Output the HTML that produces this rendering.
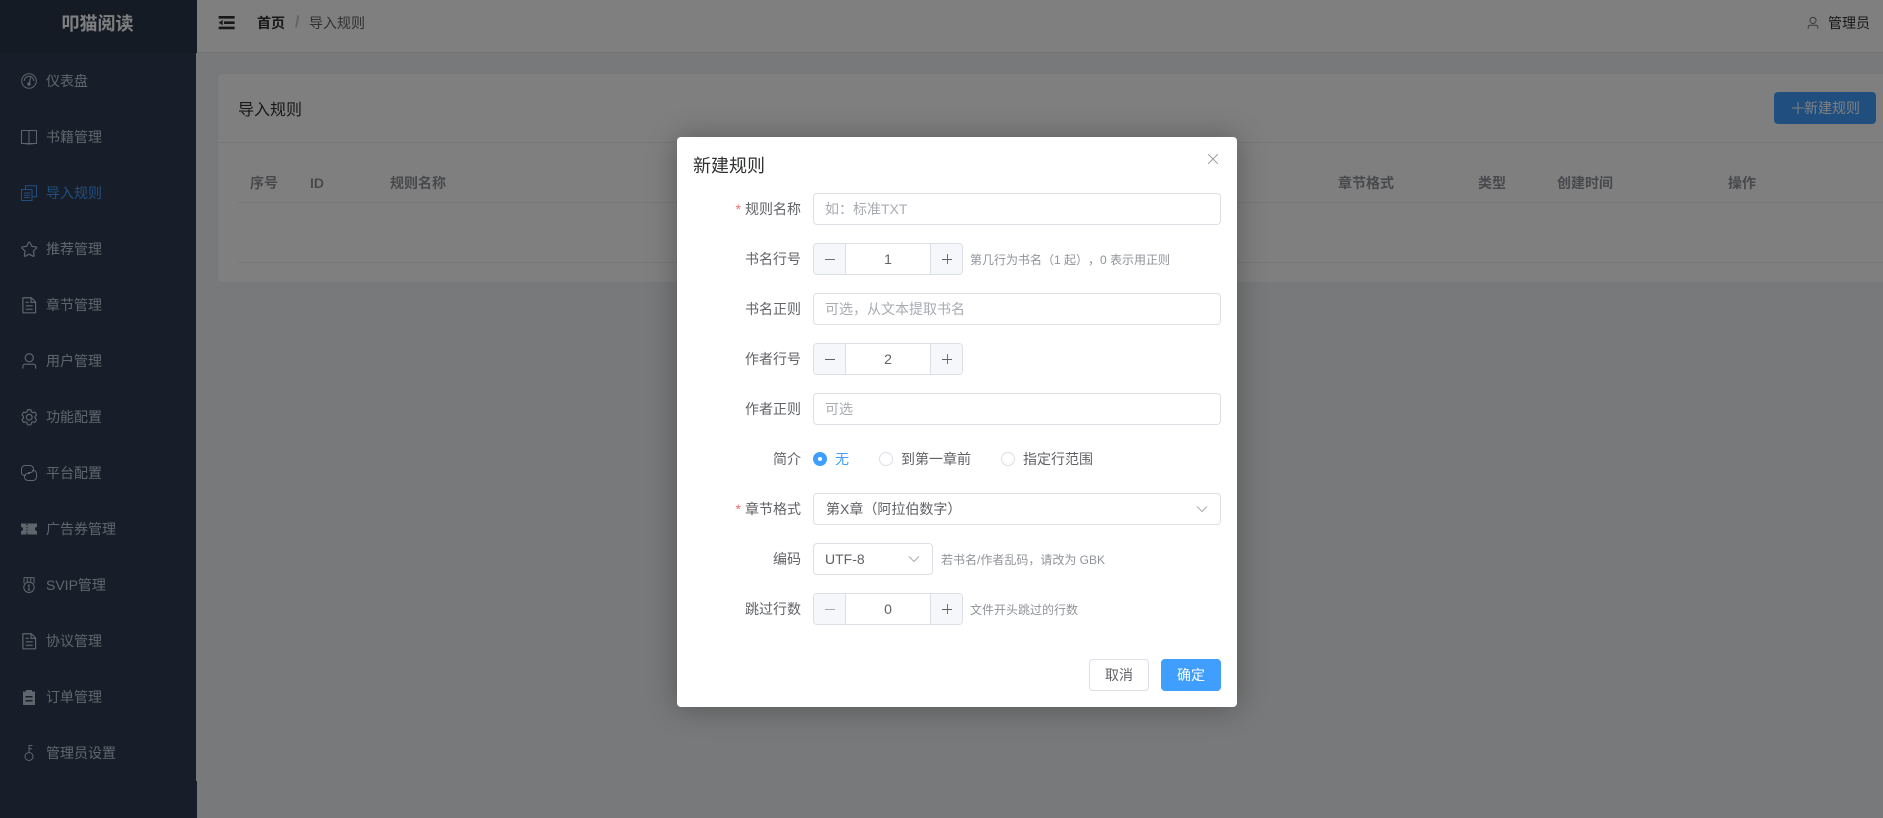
<!DOCTYPE html>
<html lang="zh"><head><meta charset="utf-8"><title>导入规则</title>
<style>
*{box-sizing:border-box}
html,body{margin:0;padding:0;width:1883px;height:818px;overflow:hidden;background:#f0f2f5;font-family:"Liberation Sans","Noto Sans CJK SC",sans-serif;font-size:14px;color:#606266}
.a{position:absolute;white-space:nowrap}
.side{position:absolute;left:0;top:0;width:196px;height:818px;background:#2e3d53}
.side2{position:absolute;left:196px;top:781px;width:1px;height:37px;background:#2e3d53}
.logo{position:absolute;left:0;top:0;width:197px;height:53px;padding-right:2px;background:#2a374a;color:#fff;font-size:18px;font-weight:bold;text-align:center;line-height:48px}
.mi{position:absolute;left:0;width:196px;height:56px;color:#bfcbd9;line-height:56px;font-size:14px}
.mi svg{position:absolute;left:21px;top:20px;width:16px;height:16px;fill:currentColor}
.mi svg.ep{left:19.750px;top:18.750px;width:18.500px;height:18.500px}
.mi span{position:absolute;left:46px;top:0}
.mi.on{color:#409eff}
.head{position:absolute;left:197px;top:0;width:1686px;height:53px;background:#fff;border-bottom:1px solid #e6e6e6;box-sizing:border-box}
.card{position:absolute;left:217px;top:73px;width:1680px;height:210px;background:#fff;border:1px solid #ebeef5;border-radius:4px}
.line{position:absolute;height:1px;background:#ebeef5}
.th{position:absolute;top:173px;line-height:20px;font-weight:bold;color:#909399;white-space:nowrap}
.mask{position:absolute;left:0;top:0;width:1883px;height:818px;background:rgba(0,0,0,.5)}
.dlg{position:absolute;left:677px;top:137px;width:560px;height:570px;background:#fff;border-radius:4px;box-shadow:0 1px 30px rgba(0,0,0,.3)}
.lb{position:absolute;right:436px;line-height:32px;height:32px;white-space:nowrap;color:#606266}
.lb i{color:#f56c6c;font-style:normal;margin-right:4px}
.inp{position:absolute;left:136px;width:408px;height:32px;border:1px solid #dcdfe6;border-radius:4px;line-height:30px;padding-left:11px;background:#fff;white-space:nowrap}
.ph{color:#a8abb2}
.num{position:absolute;left:136px;width:150px;height:32px;border:1px solid #dcdfe6;border-radius:4px;background:#fff;text-align:center;line-height:30px;overflow:hidden}
.num b{position:absolute;top:0;width:32px;height:30px;background:#f5f7fa;border:0 solid #dcdfe6}
.num b.m{left:0;border-right-width:1px}
.num b.p{right:0;border-left-width:1px}
.num svg{position:absolute;left:9px;top:8px;width:14px;height:14px}
.hint{position:absolute;font-size:12px;line-height:16px;color:#909399;white-space:nowrap}
.rd{position:absolute;top:315px;width:14px;height:14px;border-radius:50%;border:1px solid #dcdfe6;background:#fff}
.rl{position:absolute;top:312px;line-height:20px;white-space:nowrap}
.chev{position:absolute;width:14px;height:14px}
.btn{position:absolute;top:522px;width:60px;height:32px;border-radius:4px;border:1px solid #dcdfe6;text-align:center;line-height:30px;background:#fff}
</style></head><body>
<div class="head"></div>
<svg class="a" style="left:216.300px;top:12.300px;width:21.300px;height:21.300px" viewBox="0 0 1024 1024" fill="#303133"><path d="M896 192H128v128h768zm0 256H384v128h512zm0 256H128v128h768zM320 384 128 512l192 128z"/></svg>
<div class="a" style="left:257px;top:13px;line-height:20px;font-weight:bold;color:#303133">首页</div>
<div class="a" style="left:295px;top:13px;line-height:20px;color:#c0c4cc;font-weight:bold;font-size:16px">/</div>
<div class="a" style="left:309px;top:13px;line-height:20px;color:#606266">导入规则</div>
<svg class="a" style="left:1806px;top:16px;width:14px;height:14px" viewBox="0 0 1024 1024" fill="#606266"><path d="M512 512a192 192 0 1 0 0-384 192 192 0 0 0 0 384m0 64a256 256 0 1 1 0-512 256 256 0 0 1 0 512m320 320v-96a96 96 0 0 0-96-96H288a96 96 0 0 0-96 96v96a32 32 0 1 1-64 0v-96a160 160 0 0 1 160-160h448a160 160 0 0 1 160 160v96a32 32 0 1 1-64 0"/></svg>
<div class="a" style="left:1828px;top:13px;line-height:20px;color:#303133">管理员</div>

<div class="card"></div>
<div class="a" style="left:238px;top:99px;font-size:16px;line-height:24px;color:#303133">导入规则</div>
<div class="line" style="left:218px;top:142px;width:1665px"></div>
<div class="a" style="left:1774px;top:92px;width:102px;height:32px;background:#409eff;border-radius:4px;color:#fff;line-height:32px;padding-left:30px">新建规则</div>
<svg class="a" style="left:1791px;top:101px;width:14px;height:14px" viewBox="0 0 14 14" fill="none" stroke="#fff" stroke-width="1"><path d="M7 1v12M1 7h12"/></svg>
<div class="th" style="left:250px">序号</div><div class="th" style="left:310px">ID</div><div class="th" style="left:390px">规则名称</div>
<div class="th" style="left:1338px">章节格式</div><div class="th" style="left:1478px">类型</div><div class="th" style="left:1557px">创建时间</div><div class="th" style="left:1728px">操作</div>
<div class="line" style="left:238px;top:202px;width:1645px"></div>
<div class="line" style="left:238px;top:262px;width:1645px"></div>

<div class="side"></div><div class="side2"></div>
<div class="logo">叩猫阅读</div>
<div class="mi" style="top:53px"><svg viewBox="0 0 16 16" fill="none" stroke="currentColor" style="fill:none"><circle cx="8" cy="8" r="7.3"/><path d="M3.2 8A4.8 4.8 0 0 1 12.8 8"/><path d="M9.5 4.5 8.4 10"/><circle cx="8" cy="11" r="1.2" fill="currentColor"/></svg><span>仪表盘</span></div>
<div class="mi" style="top:109px"><svg viewBox="0 0 16 16" fill="none" stroke="currentColor" style="fill:none"><path d="M.5 1.5H8V14.5H.5zM8 1.5H15.5V14.5H8z"/><path d="M.5 14.5 8 15.3 15.5 14.5" stroke-width=".6"/></svg><span>书籍管理</span></div>
<div class="mi on" style="top:165px"><svg viewBox="0 0 16 16" fill="none" stroke="currentColor" style="fill:none"><path d="M.5 4.5h10.5v11H.5zM4.500 4V.7h11v11H11.300"/><path d="M3 8h6M3 10.200h6M3 12.500h6"/></svg><span>导入规则</span></div>
<div class="mi" style="top:221px"><svg class="ep" viewBox="0 0 1024 1024"><path d="m512 747.84 228.16 119.936a6.4 6.4 0 0 0 9.28-6.72l-43.52-254.08 184.512-179.904a6.4 6.4 0 0 0-3.52-10.88l-255.104-37.12L517.76 147.904a6.4 6.4 0 0 0-11.52 0L392.192 379.072l-255.104 37.12a6.4 6.4 0 0 0-3.52 10.88L318.08 606.976l-43.584 254.08a6.4 6.4 0 0 0 9.28 6.72zM313.6 924.48a70.4 70.4 0 0 1-102.144-74.24l37.888-220.928L88.96 472.96A70.4 70.4 0 0 1 128 352.896l221.76-32.256 99.2-200.96a70.4 70.4 0 0 1 126.208 0l99.2 200.96 221.824 32.256a70.4 70.4 0 0 1 39.04 120.064L774.72 629.376l37.888 220.928a70.4 70.4 0 0 1-102.144 74.24L512 820.096l-198.4 104.32z"/></svg><span>推荐管理</span></div>
<div class="mi" style="top:277px"><svg class="ep" viewBox="0 0 1024 1024"><path d="M832 384H576V128H192v768h640zm-26.496-64L640 154.496V320zM160 64h480l256 256v608a32 32 0 0 1-32 32H160a32 32 0 0 1-32-32V96a32 32 0 0 1 32-32m160 448h384v64H320zm0-192h160v64H320zm0 384h384v64H320z"/></svg><span>章节管理</span></div>
<div class="mi" style="top:333px"><svg class="ep" viewBox="0 0 1024 1024"><path d="M512 512a192 192 0 1 0 0-384 192 192 0 0 0 0 384m0 64a256 256 0 1 1 0-512 256 256 0 0 1 0 512m320 320v-96a96 96 0 0 0-96-96H288a96 96 0 0 0-96 96v96a32 32 0 1 1-64 0v-96a160 160 0 0 1 160-160h448a160 160 0 0 1 160 160v96a32 32 0 1 1-64 0"/></svg><span>用户管理</span></div>
<div class="mi" style="top:389px"><svg class="ep" viewBox="0 0 1024 1024"><path d="M600.704 64a32 32 0 0 1 30.464 22.208l35.2 109.376c14.784 7.232 28.928 15.36 42.432 24.512l112.384-24.192a32 32 0 0 1 34.432 15.36L944.32 364.8a32 32 0 0 1-4.032 37.504l-77.12 85.12a357.12 357.12 0 0 1 0 49.024l77.12 85.248a32 32 0 0 1 4.032 37.504l-88.704 153.6a32 32 0 0 1-34.432 15.296L708.8 803.904c-13.44 9.088-27.648 17.28-42.368 24.512l-35.264 109.376A32 32 0 0 1 600.704 960H423.296a32 32 0 0 1-30.464-22.208L357.696 828.48a351.616 351.616 0 0 1-42.56-24.64l-112.32 24.256a32 32 0 0 1-34.432-15.36L79.68 659.2a32 32 0 0 1 4.032-37.504l77.12-85.248a357.12 357.12 0 0 1 0-48.896l-77.12-85.248A32 32 0 0 1 79.68 364.8l88.704-153.6a32 32 0 0 1 34.432-15.296l112.32 24.256c13.568-9.152 27.776-17.408 42.56-24.64l35.2-109.312A32 32 0 0 1 423.232 64H600.64zm-23.424 64H446.72l-36.352 113.088-24.512 11.968a294.113 294.113 0 0 0-34.816 20.096l-22.656 15.36-116.224-25.088-65.28 113.152 79.68 88.192-1.92 27.136a293.12 293.12 0 0 0 0 40.192l1.92 27.136-79.808 88.192 65.344 113.152 116.224-25.024 22.656 15.296a294.113 294.113 0 0 0 34.816 20.096l24.512 11.968L446.72 896h130.688l36.48-113.152 24.448-11.904a288.282 288.282 0 0 0 34.752-20.096l22.592-15.296 116.288 25.024 65.28-113.152-79.744-88.192 1.92-27.136a293.12 293.12 0 0 0 0-40.256l-1.92-27.136 79.808-88.128-65.344-113.152-116.288 24.96-22.592-15.232a287.616 287.616 0 0 0-34.752-20.096l-24.448-11.904L577.344 128zM512 320a192 192 0 1 1 0 384 192 192 0 0 1 0-384m0 64a128 128 0 1 0 0 256 128 128 0 0 0 0-256"/></svg><span>功能配置</span></div>
<div class="mi" style="top:445px"><svg viewBox="0 0 16 16" fill="none" stroke="currentColor" style="fill:none"><path d="M5 10.500H3.500A3 3 0 0 1 .5 7.500V4A3.500 3.500 0 0 1 4 .5H9A3.500 3.500 0 0 1 12.500 4V4.500A3 3 0 0 1 9.500 7.500H7"/><path d="M11 5.500H12.500A3 3 0 0 1 15.500 8.500V12A3.500 3.500 0 0 1 12 15.500H7A3.500 3.500 0 0 1 3.500 12V11.500A3 3 0 0 1 6.500 8.500H9"/></svg><span>平台配置</span></div>
<div class="mi" style="top:501px"><svg viewBox="0 0 16 16"><path d="M0 2.500H5.500V4.500H6.500V2.500H16V6A2 2 0 0 0 16 10V13.500H6.500V11.500H5.500V13.500H0V10A2 2 0 0 0 0 6zM5.500 6V7.200H6.500V6zM5.500 8.800V10H6.500V8.800z"/></svg><span>广告券管理</span></div>
<div class="mi" style="top:557px"><svg viewBox="0 0 16 16" fill="none" stroke="currentColor" style="fill:none"><path d="M3 .6H13V6.500M3 .6V6.500M6.300 .6V5.500M9.700 .6V5.500"/><circle cx="8" cy="10.300" r="5.200"/><path d="M6.800 8.800 8 8V13M6.700 13H9.300"/></svg><span>SVIP管理</span></div>
<div class="mi" style="top:613px"><svg class="ep" viewBox="0 0 1024 1024"><path d="M832 384H576V128H192v768h640zm-26.496-64L640 154.496V320zM160 64h480l256 256v608a32 32 0 0 1-32 32H160a32 32 0 0 1-32-32V96a32 32 0 0 1 32-32m160 448h384v64H320zm0-192h160v64H320zm0 384h384v64H320z"/></svg><span>协议管理</span></div>
<div class="mi" style="top:669px"><svg viewBox="0 0 16 16"><path d="M5 1H11V2.500H14V16H2V2.500H5zM4.500 7V8.500H11.500V7zM4.500 11V12.500H11.500V11z" fill-rule="evenodd"/></svg><span>订单管理</span></div>
<div class="mi" style="top:725px"><svg viewBox="0 0 16 16" fill="none" stroke="currentColor" style="fill:none"><circle cx="8" cy="11.500" r="4"/><path d="M8 7.500V.5H11.500M8 3.800H11"/></svg><span>管理员设置</span></div>

<div class="mask"></div>
<div class="dlg">
<div class="a" style="left:16px;top:16px;font-size:18px;line-height:26px;color:#303133">新建规则</div>
<svg class="a" style="left:531px;top:17px;width:10px;height:10px" viewBox="0 0 10 10" fill="none" stroke="#909399" stroke-width=".9"><path d="M0 0 10 10M10 0 0 10"/></svg>

<div class="lb" style="top:56px"><i>*</i>规则名称</div>
<div class="inp ph" style="top:56px">如：标准TXT</div>
<div class="lb" style="top:106px">书名行号</div>
<div class="num" style="top:106px"><b class="m"><svg viewBox="0 0 14 14" fill="none" stroke="#606266" stroke-width=".9"><path d="M2 7.500h10"/></svg></b>1<b class="p"><svg viewBox="0 0 14 14" fill="none" stroke="#606266" stroke-width=".9"><path d="M7.500 2v10M2 7.500h10"/></svg></b></div>
<div class="hint" style="left:293px;top:115px">第几行为书名（1 起）<span style="margin-left:6px">，0 表示用正则</span></div>
<div class="lb" style="top:156px">书名正则</div>
<div class="inp ph" style="top:156px">可选，从文本提取书名</div>
<div class="lb" style="top:206px">作者行号</div>
<div class="num" style="top:206px"><b class="m"><svg viewBox="0 0 14 14" fill="none" stroke="#606266" stroke-width=".9"><path d="M2 7.500h10"/></svg></b>2<b class="p"><svg viewBox="0 0 14 14" fill="none" stroke="#606266" stroke-width=".9"><path d="M7.500 2v10M2 7.500h10"/></svg></b></div>
<div class="lb" style="top:256px">作者正则</div>
<div class="inp ph" style="top:256px">可选</div>
<div class="lb" style="top:306px">简介</div>
<div class="rd" style="left:136px;background:#409eff;border-color:#409eff"></div><div class="a" style="left:141px;top:320px;width:4px;height:4px;border-radius:50%;background:#fff"></div>
<div class="rl" style="left:158px;color:#409eff">无</div>
<div class="rd" style="left:202px"></div><div class="rl" style="left:224px">到第一章前</div>
<div class="rd" style="left:324px"></div><div class="rl" style="left:346px">指定行范围</div>
<div class="lb" style="top:356px"><i>*</i>章节格式</div>
<div class="inp" style="top:356px;padding-left:12px">第X章（阿拉伯数字）</div>
<svg class="chev" style="left:518px;top:365px" viewBox="0 0 14 14" fill="none" stroke="#a8abb2"><path d="M2 4.500 7 9.500 12 4.500"/></svg>
<div class="lb" style="top:406px">编码</div>
<div class="inp" style="top:406px;width:120px">UTF-8</div>
<svg class="chev" style="left:230px;top:415px" viewBox="0 0 14 14" fill="none" stroke="#a8abb2"><path d="M2 4.500 7 9.500 12 4.500"/></svg>
<div class="hint" style="left:264px;top:415px">若书名/作者乱码，请改为 GBK</div>
<div class="lb" style="top:456px">跳过行数</div>
<div class="num" style="top:456px"><b class="m"><svg viewBox="0 0 14 14" fill="none" stroke="#a8abb2" stroke-width=".9"><path d="M2 7.500h10"/></svg></b>0<b class="p"><svg viewBox="0 0 14 14" fill="none" stroke="#606266" stroke-width=".9"><path d="M7.500 2v10M2 7.500h10"/></svg></b></div>
<div class="hint" style="left:293px;top:465px">文件开头跳过的行数</div>
<div class="btn" style="left:412px">取消</div>
<div class="btn" style="left:484px;background:#409eff;border-color:#409eff;color:#fff">确定</div>
</div>
</body></html>
